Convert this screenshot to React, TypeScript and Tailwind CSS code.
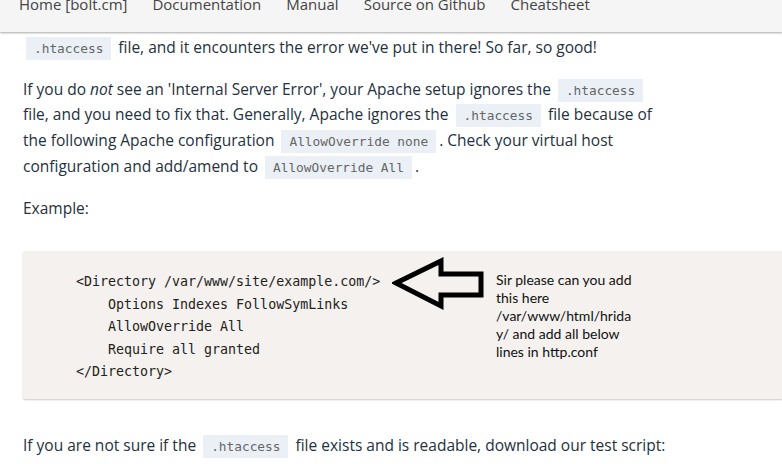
import React from 'react'

const body = "font-['Open_Sans','Noto_Sans',sans-serif]"
const mono = "font-['DejaVu_Sans_Mono','Liberation_Mono',monospace]"

function Code({ children }: { children: React.ReactNode }) {
  return (
    <code className={`${mono} bg-[#eaf0f6] text-[#666] text-[12.8px] leading-none py-[4px] px-[8px] mx-[3px]`}>
      {children}
    </code>
  )
}

const navItems = ['Home [bolt.cm]', 'Documentation', 'Manual', 'Source on Github', 'Cheatsheet']

const codeLines = [
  '<Directory /var/www/site/example.com/>',
  '    Options Indexes FollowSymLinks',
  '    AllowOverride All',
  '    Require all granted',
  '</Directory>',
]

export default function App() {
  return (
    <div className={`${body} w-[782px] h-[464px] overflow-hidden bg-white text-[#233140]`}>
      {/* Top nav, page is scrolled so it's cut off */}
      <nav className="relative z-10 h-[32px] overflow-hidden bg-[#f5f5f5] shadow-[0_1px_2px_rgba(0,0,0,0.35)]">
        <div className="flex gap-[25px] px-[19px] -mt-[9px] text-[15px] leading-[26px] text-[#444]">
          {navItems.map((item) => (
            <span key={item} className="whitespace-nowrap">
              {item}
            </span>
          ))}
        </div>
      </nav>

      <div className="pl-[23px] pt-[3px] text-[15.5px] leading-[25.7px] whitespace-nowrap">
        <p>
          <Code>.htaccess</Code> file, and it encounters the error we've put in there! So far, so good!
        </p>

        <p className="mt-[16px]">
          If you do <em>not</em> see an 'Internal Server Error', your Apache setup ignores the <Code>.htaccess</Code>
          <br />
          file, and you need to fix that. Generally, Apache ignores the <Code>.htaccess</Code> file because of
          <br />
          the following Apache configuration <Code>AllowOverride none</Code>. Check your virtual host
          <br />
          configuration and add/amend to <Code>AllowOverride All</Code>.
        </p>

        <p className="mt-[16px]">Example:</p>

        {/* Code sample with the pasted annotation on top */}
        <div className="relative mt-[30px] rounded-l-[3px] bg-[#f4f1ee] pt-[20px] pb-[15px] pl-[53px] shadow-[0_1px_2px_rgba(0,0,0,0.22)]">
          <pre className={`${mono} text-[13.3px] leading-[22.5px] text-[#222]`}>
            {codeLines.join('\n')}
          </pre>

          <svg
            className="absolute left-[369px] top-[6px]"
            width="96"
            height="56"
            viewBox="0 0 96 56"
          >
            <polygon
              points="4,26 49,4 49,17 89,17 89,38 49,38 49,49"
              fill="none"
              stroke="#000"
              strokeWidth="5"
              strokeLinejoin="miter"
            />
          </svg>

          <div className="absolute left-[473px] top-[20px] font-['Lato','Liberation_Sans',sans-serif] text-[14px] leading-[18px] text-[#111]">
            Sir please can you add
            <br />
            this here
            <br />
            /var/www/html/hrida
            <br />
            y/ and add all below
            <br />
            lines in http.conf
          </div>
        </div>

        <p className="mt-[34px]">
          If you are not sure if the <Code>.htaccess</Code> file exists and is readable, download our test script:
        </p>
      </div>
    </div>
  )
}
